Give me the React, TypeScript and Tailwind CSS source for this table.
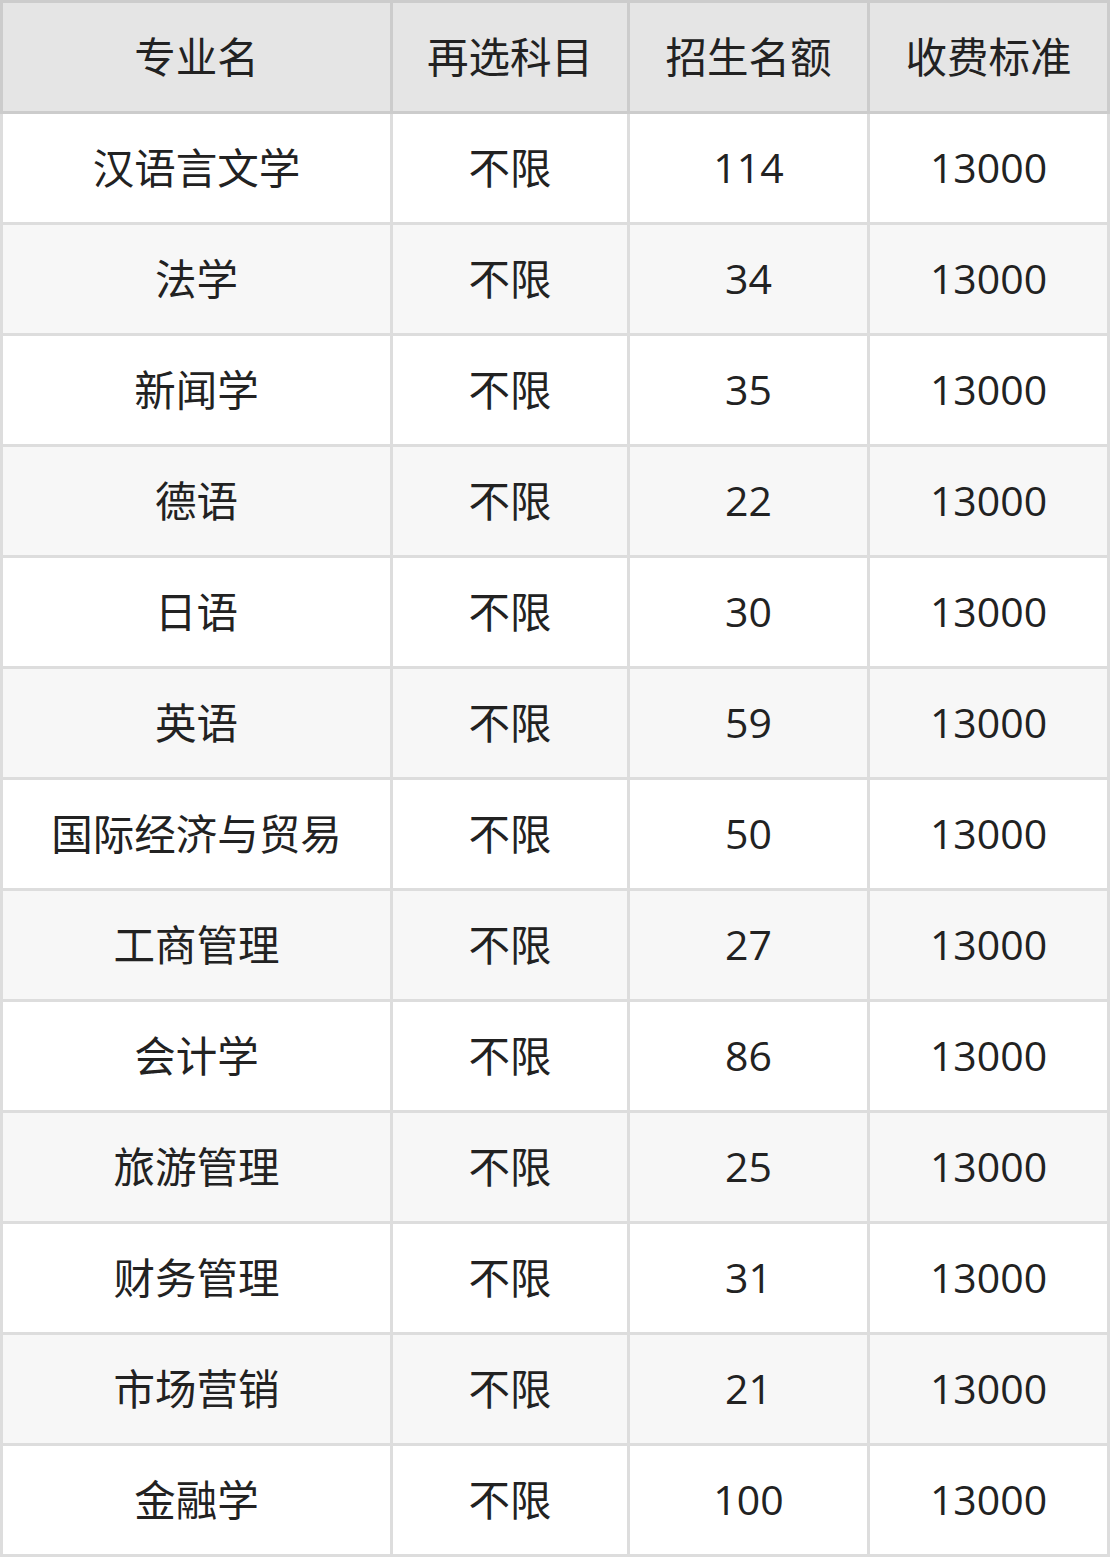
import React from "react";

const rows: [string, string, string, string][] = [
  ["汉语言文学", "不限", "114", "13000"],
  ["法学", "不限", "34", "13000"],
  ["新闻学", "不限", "35", "13000"],
  ["德语", "不限", "22", "13000"],
  ["日语", "不限", "30", "13000"],
  ["英语", "不限", "59", "13000"],
  ["国际经济与贸易", "不限", "50", "13000"],
  ["工商管理", "不限", "27", "13000"],
  ["会计学", "不限", "86", "13000"],
  ["旅游管理", "不限", "25", "13000"],
  ["财务管理", "不限", "31", "13000"],
  ["市场营销", "不限", "21", "13000"],
  ["金融学", "不限", "100", "13000"],
];

const headers = ["专业名", "再选科目", "招生名额", "收费标准"];

export default function App() {
  return (
    <div
      className="w-[1110px] text-[#222] text-[41px]"
      style={{ fontFamily: '"Open Sans", "Noto Sans CJK SC", sans-serif' }}
    >
      <div className="grid grid-cols-[387px_234px_237px_237px] gap-[3px] bg-[#cccccc] p-[3px]">
        {headers.map((h) => (
          <div key={h} className="h-[108px] bg-[#e5e5e5] flex items-center justify-center text-[41.5px]">
            {h}
          </div>
        ))}
      </div>
      <div className="grid grid-cols-[387px_234px_237px_237px] gap-[3px] bg-[#dddddd] px-[3px] pb-[3px]">
        {rows.map((r, i) =>
          r.map((c, j) => (
            <div
              key={`${i}-${j}`}
              className={`h-[108px] flex items-center justify-center ${j < 2 ? "text-[41.5px]" : "text-[41px]"} ${i % 2 === 0 ? "bg-white" : "bg-[#f7f7f7]"}`}
            >
              {c}
            </div>
          ))
        )}
      </div>
    </div>
  );
}
